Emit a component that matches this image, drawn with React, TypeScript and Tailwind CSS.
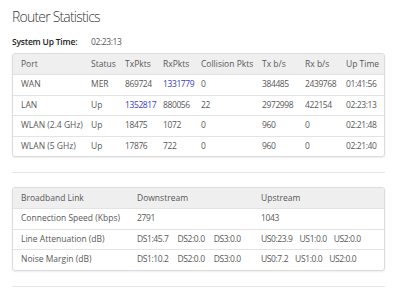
const portRows = [
  { port: 'WAN', status: 'MER', tx: '869724', rx: '1331779', rxLink: true, coll: '0', txb: '384485', rxb: '2439768', up: '01:41:56' },
  { port: 'LAN', status: 'Up', tx: '1352817', txLink: true, rx: '880056', coll: '22', txb: '2972998', rxb: '422154', up: '02:23:13' },
  { port: 'WLAN (2.4 GHz)', status: 'Up', tx: '18475', rx: '1072', coll: '0', txb: '960', rxb: '0', up: '02:21:48' },
  { port: 'WLAN (5 GHz)', status: 'Up', tx: '17876', rx: '722', coll: '0', txb: '960', rxb: '0', up: '02:21:40' },
];

const linkRows = [
  { label: 'Connection Speed (Kbps)', down: ['2791'], up: ['1043'] },
  { label: 'Line Attenuation (dB)', down: ['DS1:45.7', 'DS2:0.0', 'DS3:0.0'], up: ['US0:23.9', 'US1:0.0', 'US2:0.0'] },
  { label: 'Noise Margin (dB)', down: ['DS1:10.2', 'DS2:0.0', 'DS3:0.0'], up: ['US0:7.2', 'US1:0.0', 'US2:0.0'] },
];

const portCols = 'grid grid-cols-[70px_34px_38px_38px_61px_43px_41px_1fr] items-center pl-[8px] whitespace-nowrap';
const linkCols = 'grid grid-cols-[116px_124px_1fr] items-center pl-[8px] whitespace-nowrap';
const num = 'tracking-[-0.4px]';
const link = 'tracking-[-0.4px] text-[#3a3ac4]';

export default function App() {
  return (
    <div className="w-[400px] h-[296px] overflow-hidden bg-white px-3 pt-[7px] text-[#585858] font-['Open_Sans',sans-serif] text-[8.5px]">
      <h1 className="text-[14px] leading-[20px] font-light text-[#383838] tracking-[-0.8px]">Router Statistics</h1>
      <div className="flex items-center h-[14px] mt-[8px]">
        <span className="w-[79px] font-semibold text-[#222] tracking-[-0.2px]">System Up Time:</span>
        <span className={num}>02:23:13</span>
      </div>

      <div className="mt-[4px] w-[373px] border border-[#dcdcdc] rounded-[3px] shadow-[0_1px_2px_rgba(0,0,0,0.08)] overflow-hidden">
        <div className={`${portCols} h-[20px] bg-[#efefef]`}>
          <span>Port</span>
          <span>Status</span>
          <span>TxPkts</span>
          <span>RxPkts</span>
          <span>Collision Pkts</span>
          <span>Tx b/s</span>
          <span>Rx b/s</span>
          <span>Up Time</span>
        </div>
        {portRows.map((r) => (
          <div key={r.port} className={`${portCols} h-[20.5px] border-t border-[#e3e3e3]`}>
            <span>{r.port}</span>
            <span>{r.status}</span>
            <span className={r.txLink ? link : num}>{r.tx}</span>
            <span className={r.rxLink ? link : num}>{r.rx}</span>
            <span className={num}>{r.coll}</span>
            <span className={num}>{r.txb}</span>
            <span className={num}>{r.rxb}</span>
            <span className={num}>{r.up}</span>
          </div>
        ))}
      </div>

      <div className="mt-[15px] w-[373px] border-t border-[#e6e6e6]" />

      <div className="mt-[14px] w-[373px] border border-[#dcdcdc] rounded-[3px] shadow-[0_1px_2px_rgba(0,0,0,0.08)] overflow-hidden">
        <div className={`${linkCols} h-[20px] bg-[#efefef]`}>
          <span>Broadband Link</span>
          <span>Downstream</span>
          <span>Upstream</span>
        </div>
        {linkRows.map((r) => (
          <div key={r.label} className={`${linkCols} h-[20.5px] border-t border-[#e3e3e3]`}>
            <span>{r.label}</span>
            <span className="flex gap-[9px]">
              {r.down.map((v) => <span key={v} className={num}>{v}</span>)}
            </span>
            <span className="flex gap-[7px]">
              {r.up.map((v) => <span key={v} className={num}>{v}</span>)}
            </span>
          </div>
        ))}
      </div>

      <div className="mt-[15px] w-[373px] border-t border-[#e6e6e6]" />
    </div>
  );
}
